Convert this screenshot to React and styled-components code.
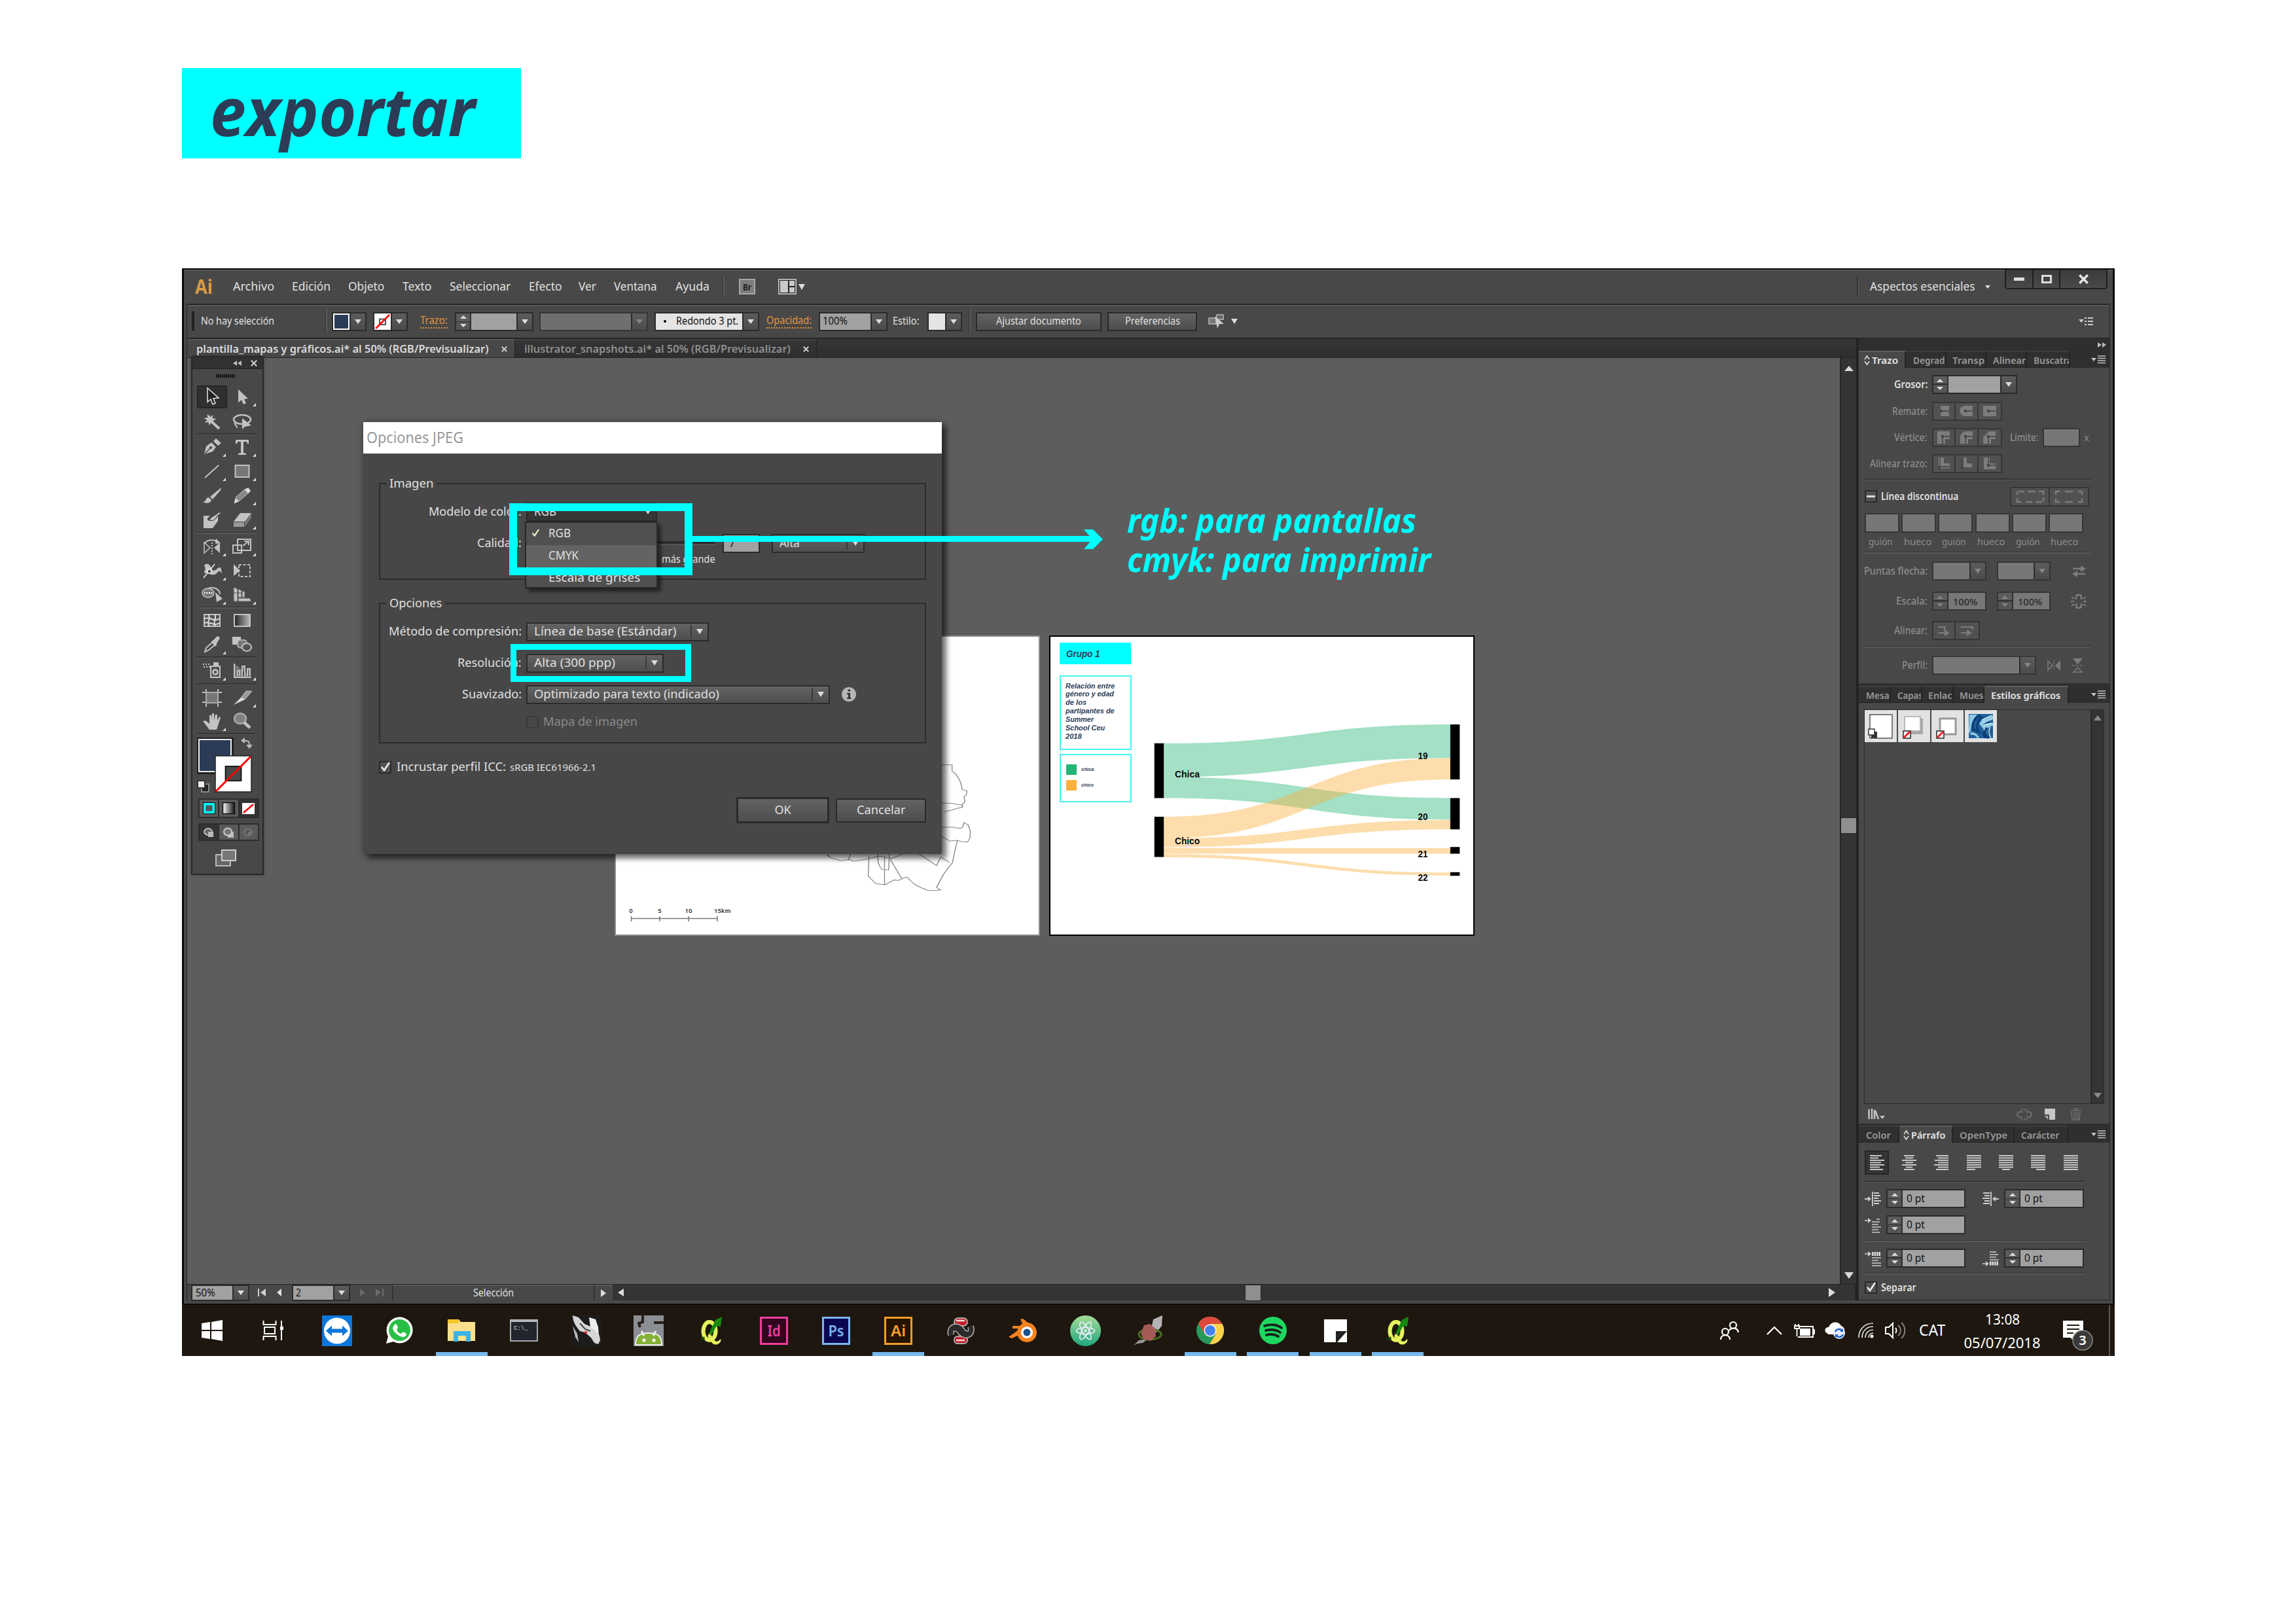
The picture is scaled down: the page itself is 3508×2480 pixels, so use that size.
import React, { useLayoutEffect, useRef, useState } from "react";
import styled, { createGlobalStyle, css } from "styled-components";

const ui = '"Noto Sans", "Open Sans", sans-serif';
const c = {
  panel: "#484848",
  canvas: "#5d5d5d",
  dark: "#262626",
  track: "#343434",
  hi: "#5a5a5a",
  text: "#e0e0e0",
  dim: "#8c8c8c",
  field: "#a1a1a1",
  off: "#777777",
  icon: "#c2c2c2",
  cyan: "#00ffff",
  navy: "#2c3c56",
  orange: "#e8953a",
};

const Global = createGlobalStyle`
  *, *::before, *::after { box-sizing: border-box; }
  html, body { margin: 0; padding: 0; background: #fff; }
  body { font-family: ${ui}; }
  svg { display: block; flex: none; overflow: visible; }
`;

/* ---------- text fitted to a width ---------- */
const FitBox = styled.span`
  display: block;
  flex: none;
  width: ${(p) => p.$w}px;
  margin-left: ${(p) => p.$gap || 0}px;
  font-size: ${(p) => p.$size}px;
  font-weight: ${(p) => p.$weight || 400};
  color: ${(p) => p.$color || "inherit"};
  line-height: 1.2;
`;
const FitInner = styled.span`
  display: inline-block;
  white-space: nowrap;
  transform-origin: left center;
`;
function Txt({ w, size = 18, weight, color, gap, children }) {
  const ref = useRef(null);
  const [k, setK] = useState(1);
  useLayoutEffect(() => {
    const n = ref.current.offsetWidth;
    if (n) setK(w / n);
  }, [w]);
  return (
    <FitBox $w={w} $size={size} $weight={weight} $color={color} $gap={gap}>
      <FitInner ref={ref} style={{ transform: `scaleX(${k})` }}>{children}</FitInner>
    </FitBox>
  );
}

/* ---------- page ---------- */
const Page = styled.main`
  width: 3508px;
  height: 2480px;
  padding: 104px 0 0 278px;
  background: #fff;
  overflow: hidden;
`;
const Title = styled.h1`
  margin: 0 0 168px;
  width: 518px;
  height: 138px;
  padding: 0 0 9px 43px;
  display: flex;
  align-items: center;
  background: ${c.cyan};
  color: ${c.navy};
  font-style: italic;
`;
const Screen = styled.section`
  width: 2953px;
  height: 1662px;
  display: flex;
  flex-direction: column;
`;
const Win = styled.div`
  height: 1584px;
  flex: none;
  display: flex;
  flex-direction: column;
  border: 3px solid #0a0a0a;
  border-width: 2px 3px;
  background: ${c.panel};
  color: ${c.text};
`;
const Row = styled.div`
  display: flex;
  align-items: center;
  height: ${(p) => (p.$h ? p.$h + "px" : "auto")};
  margin-top: ${(p) => p.$mt || 0}px;
  padding-left: ${(p) => p.$pl || 0}px;
  flex: none;
`;
const Gap = styled.span`
  flex: none;
  width: ${(p) => p.$w}px;
`;
const Grow = styled.span`
  flex: 1;
`;
const MenuBar = styled(Row)`
  height: 52px;
  padding-left: 17px;
  padding-bottom: 2px;
  border-top: 2px solid #5c5c5c;
  position: relative;
`;
const VLine = styled.span`
  flex: none;
  width: 3px;
  height: ${(p) => p.$h || 32}px;
  margin-left: ${(p) => p.$gap || 0}px;
  background: linear-gradient(90deg, #333 50%, #5a5a5a 50%);
`;
const WinButtons = styled.div`
  align-self: flex-start;
  display: flex;
  margin-top: -2px;
  margin-left: 22px;
  margin-right: 8px;
  width: 157px;
  height: 30px;
  border: 2px solid #1f1f1f;
  border-top: 0;
  border-radius: 0 0 5px 5px;
  background: linear-gradient(#3a3a3a, #4a4a4a);
`;
const WinButton = styled.span`
  width: ${(p) => p.$w}px;
  display: flex;
  align-items: center;
  justify-content: center;
  border-right: ${(p) => (p.$last ? 0 : "2px solid #1f1f1f")};
`;
const ControlBar = styled(Row)`
  height: 52px;
  margin: 0 4px;
  padding-left: 7px;
  border-top: 2px solid ${c.dark};
  border-left: 1px solid ${c.dark};
  border-right: 1px solid ${c.dark};
  box-shadow: inset 0 2px 0 ${c.hi};
`;
const Body = styled.div`
  display: flex;
  gap: 3px;
  height: 1471px;
  margin: 0 4px;
  padding-left: 1px;
  background: #222;
`;
const Left = styled.div`
  width: 2550px;
  display: flex;
  flex-direction: column;
`;
const DocTabs = styled.div`
  display: flex;
  height: 31px;
  padding-top: 2px;
  background: linear-gradient(#262626 2px, #363636 2px, #2e2e2e);
  border-bottom: 1px solid #252525;
`;
const DocTab = styled.div`
  width: ${(p) => p.$w}px;
  padding-left: 14px;
  display: flex;
  align-items: center;
  color: ${(p) => (p.$on ? "#dcdcdc" : "#8f8f8f")};
  background: ${(p) => (p.$on ? "#484848" : "transparent")};
  border-right: 1px solid #222;
  border-top: 2px solid ${(p) => (p.$on ? "#585858" : "#414141")};
`;
const Work = styled.div`
  display: flex;
  height: 1415px;
`;
const Canvas = styled.div`
  position: relative;
  width: 2525px;
  background: ${c.canvas};
`;
const VScroll = styled.div`
  width: 25px;
  display: flex;
  flex-direction: column;
  align-items: center;
  background: ${c.track};
  border-left: 2px solid ${c.dark};
`;
const Thumb = styled.span`
  width: 25px;
  height: 25px;
  flex: none;
  background: #8f8f8f;
  border: 1px solid #262626;
  margin: ${(p) => p.$m || 0};
`;
const Status = styled.div`
  display: flex;
  align-items: center;
  height: 25px;
  padding-left: 6px;
  background: ${c.panel};
  border-top: 1px solid ${c.dark};
`;
const StatusLabel = styled.span`
  display: flex;
  align-items: center;
  height: 24px;
  width: ${(p) => p.$w}px;
  padding-left: ${(p) => p.$pl || 0}px;
  justify-content: ${(p) => (p.$pl ? "flex-start" : "center")};
  border-left: 2px solid #333;
  border-top: 2px solid #585858;
`;
const HScroll = styled.div`
  display: flex;
  align-items: center;
  height: 24px;
  width: 1901px;
  padding-left: 8px;
  background: ${c.track};
  border-right: 2px solid ${c.dark};
`;

/* ---------- small controls ---------- */
const Tri = styled.span`
  flex: none;
  width: 0;
  height: 0;
  margin-left: ${(p) => p.$gap || 0}px;
  border: ${(p) => p.$s || 5}px solid transparent;
  ${(p) => {
    const s = p.$s || 5;
    const col = p.$color || "#dcdcdc";
    const len = p.$len || s * 1.4;
    if (p.$dir === "up") return css`border-top: 0; border-bottom: ${len}px solid ${col};`;
    if (p.$dir === "left") return css`border-left: 0; border-right: ${len}px solid ${col};`;
    if (p.$dir === "right") return css`border-right: 0; border-left: ${len}px solid ${col};`;
    return css`border-bottom: 0; border-top: ${len}px solid ${col};`;
  }}
`;
const Group = styled.span`
  display: flex;
  flex: none;
  height: ${(p) => p.$h || 29}px;
  margin-left: ${(p) => p.$gap || 0}px;
  border: 2px solid ${(p) => (p.$off ? "#363636" : "#2b2b2b")};
`;
const Well = styled.span`
  width: ${(p) => p.$w}px;
  display: flex;
  align-items: center;
  padding-left: ${(p) => p.$pl || 0}px;
  background: ${(p) => p.$bg || c.field};
  color: ${(p) => (p.$off ? "#2b2b2b" : "#111")};
  box-shadow: ${(p) => (p.$line ? "inset 0 0 0 2px #fff" : "none")};
`;
const DropBtn = styled.span`
  width: 24px;
  display: flex;
  align-items: center;
  justify-content: center;
  border-left: 2px solid #2b2b2b;
  background: linear-gradient(#5c5c5c, #4b4b4b);
`;
const StepBtn = styled.span`
  width: 23px;
  display: flex;
  flex-direction: column;
  align-items: center;
  justify-content: space-around;
  border-right: 2px solid #2f2f2f;
  background: linear-gradient(#5c5c5c 46%, #2f2f2f 46%, #2f2f2f 53%, #555 53%);
`;
function Combo({ w, bg, off, gap, h, pl, step, line, drop = true, children }) {
  const col = off ? "#858585" : "#dcdcdc";
  const inner = w - 4 - (step ? 23 : 0) - (drop ? 24 : 0);
  return (
    <Group $gap={gap} $h={h} $off={off}>
      {step && (
        <StepBtn>
          <Tri $dir="up" $s={5} $len={5} $color={col} />
          <Tri $s={5} $len={5} $color={col} />
        </StepBtn>
      )}
      <Well $w={inner} $bg={bg || (off ? c.off : c.field)} $pl={pl} $off={off} $line={line}>{children}</Well>
      {drop && <DropBtn><Tri $s={5} $color={col} /></DropBtn>}
    </Group>
  );
}
const Link = styled.span`
  flex: none;
  margin-left: ${(p) => p.$gap || 0}px;
  color: ${c.orange};
  border-bottom: 2px dotted ${c.orange};
  line-height: 1;
`;
const PushBtn = styled.span`
  display: flex;
  flex: none;
  align-items: center;
  justify-content: center;
  width: ${(p) => p.$w}px;
  height: ${(p) => p.$h || 29}px;
  margin-left: ${(p) => p.$gap || 0}px;
  border: ${(p) => p.$b || 2}px solid #2a2a2a;
  background: linear-gradient(#636363, #4d4d4d);
`;
const Grip = styled.span`
  flex: none;
  width: ${(p) => p.$w}px;
  height: ${(p) => p.$h}px;
  background: repeating-linear-gradient(${(p) => (p.$w > p.$h ? 90 : 180)}deg, #111 0 2px, transparent 2px 3px);
`;

/* ---------- floating tools ---------- */
const Tools = styled.div`
  position: absolute;
  left: 6px;
  top: -3px;
  width: 111px;
  height: 793px;
  display: flex;
  flex-direction: column;
  background: ${c.panel};
  border: 2px solid #282828;
  border-top-left-radius: 4px;
  border-top-right-radius: 4px;
  box-shadow: 0 0 4px rgba(0, 0, 0, 0.35);
`;
const ToolsHead = styled.div`
  height: 18px;
  flex: none;
  display: flex;
  align-items: center;
  justify-content: flex-end;
  gap: 14px;
  padding-right: 8px;
  background: #313131;
  border-bottom: 1px solid #222;
`;
const ToolsGrip = styled.div`
  height: 20px;
  display: flex;
  align-items: center;
  justify-content: center;
  padding-right: 6px;
  flex: none;
`;
const ToolRow = styled.div`
  display: flex;
  flex: none;
  height: ${(p) => p.$h || 37}px;
  padding-left: 7px;
  align-items: center;
`;
const ToolCell = styled.span`
  display: flex;
  align-items: center;
  justify-content: center;
  width: 46px;
  height: 35px;
  background: ${(p) => (p.$on ? "#303030" : "transparent")};
  border: ${(p) => (p.$on ? "2px solid #262626" : "0")};
`;
const Rule = styled.hr`
  flex: none;
  width: ${(p) => p.$w}px;
  height: 3px;
  margin: ${(p) => p.$m};
  border: 0;
  background: linear-gradient(#353535 50%, #585858 50%);
`;
const Chips = styled.div`
  display: flex;
  flex: none;
  width: 93px;
  height: ${(p) => p.$h}px;
  margin: ${(p) => p.$mt}px 0 0 9px;
  border: 2px solid #2d2d2d;
`;
const Chip = styled.span`
  flex: 1;
  display: flex;
  align-items: center;
  justify-content: center;
  background: ${(p) => (p.$on ? "#333" : "#5a5a5a")};
  border-left: ${(p) => (p.$first ? "0" : "2px solid #2d2d2d")};
`;

/* ---------- dialog ---------- */
const Dialog = styled.div`
  position: absolute;
  left: 269px;
  top: 98px;
  width: 884px;
  height: 660px;
  background: #474747;
  box-shadow: 7px 7px 8px rgba(0, 0, 0, 0.5), 0 0 10px rgba(0, 0, 0, 0.35);
  display: flex;
  flex-direction: column;
  padding: 0 24px;
`;
const DialogTitle = styled.div`
  margin: 0 -24px;
  height: 48px;
  flex: none;
  background: #fff;
  display: flex;
  align-items: center;
  padding-left: 5px;
`;
const FieldSet = styled.fieldset`
  flex: none;
  margin: ${(p) => p.$mt}px 0 0;
  padding: 0;
  min-width: 0;
  width: 836px;
  height: ${(p) => p.$h}px;
  border: 2px solid #2c2c2c;
`;
const Legend = styled.legend`
  height: 24px;
  margin-left: 9px;
  padding: 0 5px;
  display: flex;
  align-items: center;
`;
const FieldLabel = styled.span`
  flex: none;
  display: flex;
  justify-content: flex-end;
  width: ${(p) => p.$w}px;
  margin-right: 7px;
  color: ${(p) => (p.$off ? c.dim : c.text)};
`;
const SelectBox = styled.span`
  display: flex;
  flex: none;
  align-items: center;
  width: ${(p) => p.$w}px;
  height: 29px;
  margin-left: ${(p) => p.$gap || 0}px;
  padding-left: 10px;
  border: 2px solid #2a2a2a;
  background: ${(p) => (p.$open ? "#363636" : "linear-gradient(#636363, #4e4e4e)")};
`;
const SelectArrow = styled.span`
  margin-left: auto;
  width: 26px;
  height: 20px;
  display: flex;
  align-items: center;
  padding-left: 7px;
  border-left: 2px solid #3a3a3a;
`;
function Select({ w, tw, gap, open, children }) {
  return (
    <SelectBox $w={w} $gap={gap} $open={open}>
      <Txt w={tw} size={18}>{children}</Txt>
      <SelectArrow><Tri $s={5.5} $len={8} /></SelectArrow>
    </SelectBox>
  );
}
const Slider = styled.span`
  width: 289px;
  height: 6px;
  background: #2a2a2a;
  border-bottom: 2px solid #555;
`;
const Popup = styled.div`
  position: absolute;
  left: 247px;
  top: 152px;
  width: 203px;
  height: 102px;
  border: 2px solid #282828;
  background: #505050;
  box-shadow: 5px 5px 5px rgba(0, 0, 0, 0.5);
`;
const PopupItem = styled.div`
  height: 34px;
  display: flex;
  align-items: center;
  padding-left: ${(p) => (p.$checked ? 8 : 34)}px;
  padding-bottom: 2px;
  background: ${(p) => (p.$hot ? "#636363" : "transparent")};
`;
const Check = styled.span`
  flex: none;
  width: 19px;
  height: 19px;
  display: flex;
  align-items: center;
  justify-content: center;
  border: 2px solid ${(p) => (p.$off ? "#3a3a3a" : "#2a2a2a")};
  background: ${(p) => (p.$off ? "#474747" : "#525252")};
`;
const DialogButtons = styled.div`
  display: flex;
  align-items: center;
  justify-content: flex-end;
  gap: 10px;
  margin-top: 32px;
`;

/* ---------- artboards ---------- */
const Artboard = styled.div`
  position: absolute;
  left: ${(p) => p.$x}px;
  top: 424px;
  width: 650px;
  height: 459px;
  background: #fff;
  border: 2px solid ${(p) => (p.$on ? "#000" : "#8c8c8c")};
`;
const BoardArt = styled.svg`
  position: absolute;
  left: -2px;
  top: -2px;
`;
const Side = styled.div`
  display: flex;
  flex-direction: column;
  width: 110px;
  margin: 9px 0 0 14px;
  font-family: "Liberation Sans", Arial, sans-serif;
  font-weight: 700;
  font-style: italic;
  color: ${c.navy};
`;
const GroupName = styled.div`
  width: 109px;
  height: 33px;
  padding-left: 10px;
  display: flex;
  align-items: center;
  background: ${c.cyan};
`;
const Note = styled.div`
  height: 114px;
  margin-top: 17px;
  padding: 8px 0 0 7px;
  border: 2px solid #43f4f6;
  display: flex;
  flex-direction: column;
`;
const NoteLine = styled.div`
  height: 12.9px;
  display: flex;
  align-items: center;
`;
const Key = styled.div`
  height: 74px;
  margin-top: 6px;
  padding: 14px 0 0 8px;
  border: 2px solid #43f4f6;
  display: flex;
  flex-direction: column;
  gap: 8px;
`;
const KeyRow = styled.div`
  display: flex;
  align-items: center;
  gap: 7px;
`;
const KeyColor = styled.span`
  width: 16px;
  height: 16px;
  background: ${(p) => p.$bg};
`;

/* ---------- annotations ---------- */
const Frame = styled.span`
  position: absolute;
  left: ${(p) => p.$x}px;
  top: ${(p) => p.$y}px;
  width: ${(p) => p.$w}px;
  height: ${(p) => p.$h}px;
  border: ${(p) => p.$b}px solid ${c.cyan};
`;
const Arrow = styled.svg`
  position: absolute;
  left: 771px;
  top: 262px;
`;
const Callout = styled.div`
  position: absolute;
  left: 1436px;
  top: 218px;
  display: flex;
  flex-direction: column;
  color: ${c.cyan};
  font-style: italic;
`;

/* ---------- dock ---------- */
const Dock = styled.aside`
  width: 385px;
  display: flex;
  flex-direction: column;
  border: 1px solid #262626;
  background: #2f2f2f;
`;
const DockHead = styled.div`
  height: 19px;
  flex: none;
  display: flex;
  align-items: center;
  justify-content: flex-end;
  padding-right: 5px;
`;
const Tabs = styled.div`
  height: 26px;
  margin-top: ${(p) => p.$mt || 0}px;
  flex: none;
  display: flex;
  background: #2f2f2f;
`;
const Tab = styled.span`
  width: ${(p) => p.$w}px;
  flex: none;
  display: flex;
  align-items: center;
  overflow: hidden;
  padding-left: ${(p) => p.$pl}px;
  color: ${(p) => (p.$on ? "#e6e6e6" : "#999")};
  background: ${(p) => (p.$on ? c.panel : "#303030")};
  border-top: 2px solid ${(p) => (p.$on ? "#5e5e5e" : "#3d3d3d")};
  border-right: 2px solid #242424;
  border-bottom: ${(p) => (p.$on ? 0 : "1px solid #232323")};
`;
const TabMenu = styled.span`
  margin-left: auto;
  display: flex;
  align-items: center;
  padding-right: 6px;
`;
const Pane = styled.div`
  height: ${(p) => p.$h}px;
  flex: none;
  background: ${c.panel};
  display: flex;
  flex-direction: column;
`;
const OffBtns = styled.span`
  display: flex;
  flex: none;
  height: ${(p) => p.$h || 29}px;
  margin-left: ${(p) => p.$gap || 0}px;
  border: 2px solid #363636;
`;
const OffBtn = styled.span`
  width: ${(p) => p.$w || 34.5}px;
  display: flex;
  align-items: center;
  justify-content: center;
  background: #515151;
  border-right: ${(p) => (p.$last ? "0" : "2px solid #363636")};
`;
const DashCols = styled.div`
  display: grid;
  grid-template-columns: repeat(6, 53px);
  column-gap: 3.2px;
  margin-left: 9px;
  margin-top: ${(p) => p.$mt || 0}px;
  height: ${(p) => p.$h}px;
  flex: none;
  align-items: stretch;
`;
const DashField = styled.span`
  background: ${c.off};
  border: 2px solid #363636;
`;
const DashLabel = styled.span`
  display: flex;
  align-items: center;
  justify-content: center;
  padding-right: 4px;
`;
const StyleList = styled.div`
  display: flex;
  justify-content: space-between;
  width: 367px;
  height: 603px;
  margin: 10px 0 0 8px;
  border: 1px solid #2a2a2a;
  flex: none;
`;
const Swatches = styled.div`
  display: flex;
  gap: 2px;
`;
const Swatch = styled.span`
  width: 49px;
  height: 49px;
  background: #e2e2e2;
`;
const ListScroll = styled.div`
  width: 20px;
  display: flex;
  flex-direction: column;
  align-items: center;
  justify-content: space-between;
  padding: 8px 0;
  background: ${c.track};
  border-left: 2px solid #2a2a2a;
`;
const AlignBtn = styled.span`
  width: 37px;
  height: 37px;
  margin-right: 12.4px;
  flex: none;
  display: flex;
  align-items: center;
  justify-content: center;
  background: ${(p) => (p.$on ? "#343434" : "transparent")};
  border: ${(p) => (p.$on ? "2px solid #262626" : "0")};
`;

/* ---------- taskbar ---------- */
const Taskbar = styled.footer`
  height: 78px;
  display: flex;
  background: #1e170f;
  color: #fff;
`;
const Task = styled.span`
  flex: none;
  width: ${(p) => p.$w || 95.35}px;
  display: flex;
  align-items: center;
  justify-content: center;
  background: ${(p) => (p.$run ? "linear-gradient(#76b9ed,#76b9ed) center bottom / 79px 6px no-repeat" : "none")};
`;
const Clock = styled(Task)`
  flex-direction: column;
  gap: 10px;
`;
const TrayEnd = styled.span`
  flex: none;
  width: 9px;
  margin-left: 25px;
  border-left: 2px solid #5a5650;
`;

/* ---------- drawings ---------- */
const G = c.icon;
const toolArt = {
  select: <path d="M9 1v21l5-4 3 8 4-2-3-7 8-1z" fill="#222" stroke="#ddd" strokeWidth="1.6" />,
  direct: <path d="M10 3v20l5-4 3 7 4-2-3-6 6-1z" fill={G} />,
  wand: <><path d="M12 1l1.500 5 4-3-1 5 6 1-5 3 2 4-5-1-3 4-1-5-6 1 4-4-5-3 6-1-1-5 4 3z" fill={G} /><path d="M16 14l11 10" stroke={G} strokeWidth="4" /></>,
  lasso: <><ellipse cx="16" cy="10" rx="13" ry="7" fill="none" stroke={G} strokeWidth="2.500" /><path d="M5 14c-2 5 4 4 3 9" fill="none" stroke={G} strokeWidth="2" /><path d="M16 8v17l4-4 10-2z" fill={G} /></>,
  pen: <><path d="M4 25l3-12 8-6 7 7-5 7z" fill={G} /><path d="M18 5l4-4 8 7-5 4z" fill={G} /><path d="M5 24l9-9" stroke="#444" strokeWidth="1.500" /><circle cx="14" cy="15" r="2" fill="#444" /></>,
  type: <path d="M6 3h20v6h-2l-1-3h-5v17l4 1v2H10v-2l4-1V6H9L8 9H6z" fill={G} />,
  line: <path d="M5 24L26 5" stroke={G} strokeWidth="2" />,
  rect: <rect x="5.500" y="5" width="21" height="18" fill="#777" stroke={G} strokeWidth="2" />,
  brush: <><path d="M13 16L30 2l-1 4-12 14z" fill={G} /><path d="M2 24c5 0 4-7 9-7l4 4c-1 5-8 6-13 3z" fill={G} /></>,
  pencil: <><path d="M4 26l3-10L21 4l6 5L12 22z" fill="#888" stroke={G} /><path d="M20 5l5-3 4 5-4 4z" fill="#ddd" /><path d="M4 26l2-8 5 5z" fill="#ddd" /></>,
  blob: <><path d="M3 8h10c-6 5-6 8 2 8 8-1 7-6 10-8v8l-8 11H3z" fill={G} /><path d="M12 15c2-6 8-6 14-12h5l-8 6c-2 6-6 7-11 6z" fill={G} stroke="#333" strokeWidth=".8" /></>,
  eraser: <><path d="M3 17L13 4h17L20 17z" fill={G} /><path d="M3 18h16v7H3z" fill="#999" /><path d="M20 17l10-12v6L20 25z" fill="#777" /></>,
  reflect: <><path d="M5 9c4-6 14-6 20-2" fill="none" stroke={G} strokeWidth="2" /><path d="M22 2l7 7-8 1z" fill={G} /><path d="M4 8v16l9-8z" fill="none" stroke={G} strokeWidth="1.500" /><path d="M28 8v16l-9-8z" fill={G} /><path d="M16 8v18" stroke={G} strokeWidth="2" strokeDasharray="2 2" /></>,
  scale: <><rect x="9" y="3" width="20" height="17" fill="none" stroke={G} strokeWidth="2" /><rect x="2" y="12" width="13" height="12" fill="none" stroke={G} strokeWidth="2" /><path d="M17 13l8-6m-6-1h7v6" stroke={G} strokeWidth="2" fill="none" /></>,
  warp: <><path d="M4 6c6-6 9 0 12 6s9-4 12-3 2 6 3 10c-3-5-4-6-7-2s-8 4-12 2-9 0-8-3 3-2 0-10z" fill={G} /><path d="M3 25L20 4" stroke="#eee" strokeWidth="1.500" /><circle cx="12" cy="15" r="3" fill="#444" stroke="#eee" strokeWidth="1.500" /></>,
  free: <><path d="M3 4v18l10-8z" fill={G} /><rect x="11" y="5" width="17" height="18" fill="none" stroke={G} strokeWidth="2" strokeDasharray="4 2.500" /></>,
  shape: <><ellipse cx="10" cy="11" rx="9" ry="7" fill="#777" stroke={G} strokeWidth="1.500" /><path d="M10 4c10-3 18 2 18 9" fill="none" stroke={G} strokeWidth="2" /><path d="M4 11h14" stroke="#fff" strokeWidth="2" strokeDasharray="2 1.500" /><path d="M21 10l11 10-9 5z" fill={G} /></>,
  persp: <path d="M3 2l6 3v19H3zM10 5l5 2v11h-5zM16 8l4 1v9h-4zM10 19h18l2 5H10zM3 11h12" fill={G} stroke="#555" strokeWidth="1" />,
  mesh: <><rect x="4" y="5" width="24" height="18" fill="#555" stroke={G} strokeWidth="2" /><path d="M4 12c8-6 14 6 24-1M4 18c8-4 14 6 24 0M10 5c6 6-4 12 2 18M20 5c4 6-4 12 1 18" fill="none" stroke="#ddd" strokeWidth="2" /></>,
  grad: <><defs><linearGradient id="tg"><stop offset="0" stopColor="#222" /><stop offset="1" stopColor="#bbb" /></linearGradient></defs><rect x="4" y="5" width="24" height="18" fill="url(#tg)" stroke={G} strokeWidth="2" /></>,
  dropper: <><path d="M5 25l2-6 10-9 4 4-11 9z" fill="none" stroke={G} strokeWidth="2" /><path d="M15 9l3-2 5-5c3-2 6 1 4 4l-4 6 0 3-3 2z" fill={G} /></>,
  blend: <><path d="M1 2h13v12H1z" fill={G} /><rect x="9" y="7" width="14" height="12" rx="4" fill="#777" stroke={G} strokeWidth="1.500" /><ellipse cx="23" cy="18" rx="7" ry="6" fill="#555" stroke={G} strokeWidth="2" /></>,
  spray: <><path d="M2 4h12M3 8h10" stroke={G} strokeWidth="2" strokeDasharray="2 2" /><path d="M18 1h8v5h-8z" fill={G} /><rect x="14" y="7" width="14" height="17" fill="#555" stroke={G} strokeWidth="2" /><circle cx="21" cy="16" r="3.500" fill="none" stroke="#ddd" strokeWidth="2" /></>,
  graph: <path d="M4 3v21h26M9 22v-8h3v8M16 22V7h4v15M24 22V11h4v11" fill="#777" stroke={G} strokeWidth="2" />,
  board: <><rect x="7" y="6" width="18" height="16" fill="#777" stroke={G} strokeWidth="1.500" /><path d="M1 6h5M26 6h5M1 21h5M26 21h5M7 1v4M25 1v4M7 23v5M25 23v5" stroke={G} strokeWidth="2" /></>,
  slice: <><path d="M3 25L15 13l5 4z" fill="#ddd" /><path d="M15 13L22 4h9L20 17z" fill="#999" stroke={G} /></>,
  hand: <path d="M2 14l4-1 6 5V5h3v8l1-11h3v11l2-9h3v9l3-6 2 1-3 10-3 9H12z" fill={G} />,
  zoom: <><ellipse cx="13" cy="10" rx="9" ry="8" fill="#808080" stroke="#aaa" strokeWidth="2.500" /><path d="M19 16l9 8" stroke={G} strokeWidth="5" /></>,
};
function Tool({ n, on, fly }) {
  return (
    <ToolCell $on={on}>
      <svg width="32" height="28" viewBox="0 0 32 28">
        {toolArt[n]}
        {fly && <path d="M37 24v5h-5z" fill="#ddd" />}
      </svg>
    </ToolCell>
  );
}
const CloseX = ({ s = 12, color = "#cfcfcf", sw = 2.5 }) => (
  <svg width={s} height={s} viewBox="0 0 12 12"><path d="M1 1l10 10M11 1L1 11" stroke={color} strokeWidth={sw} /></svg>
);
const Chevrons = ({ flip }) => (
  <svg width="13" height="8" viewBox="0 0 13 8"><path d={flip ? "M6 0v8L0 4zM13 0v8L7 4z" : "M0 0v8l6-4zM7 0v8l6-4z"} fill="#bbb" /></svg>
);
const ListMenu = () => (
  <svg width="22" height="12" viewBox="0 0 22 12"><path d="M0 4h8L4 9z" fill="#c4c4c4" /><path d="M10 1h12M10 4.500h12M10 8h12M10 11.500h12" stroke="#c4c4c4" strokeWidth="1.700" /></svg>
);
const Diamond = () => (
  <svg width="9" height="15" viewBox="0 0 9 15"><path d="M1 6l3.500-5L8 6M1 9l3.500 5L8 9" fill="none" stroke="#ddd" strokeWidth="1.600" /></svg>
);
const Tick = ({ color = "#ececec", s = 15 }) => (
  <svg width={s} height={s} viewBox="0 0 15 15"><path d="M2 7l4 5L14 0" fill="none" stroke={color} strokeWidth="2.600" /></svg>
);
const None = ({ w, h, hollow }) => (
  <svg width={w} height={h} viewBox={`0 0 ${w} ${h}`}>
    <rect width={w} height={h} fill="#fff" />
    {hollow && <rect x={w * 0.32} y={h * 0.34} width={w * 0.36} height={h * 0.34} fill="none" stroke="#222" strokeWidth="1.500" />}
    <path d={`M2 ${h - 2}L${w - 2} 2`} stroke="#f00" strokeWidth="2.500" />
  </svg>
);
const O = "#7c7c7c";
const SmallIcon = ({ d, w = 22, h = 16, fill = O, stroke, extra }) => (
  <svg width={w} height={h} viewBox={`0 0 ${w} ${h}`}><path d={d} fill={fill} stroke={stroke} strokeWidth="1.700" />{extra}</svg>
);
const dot = (x, y) => <rect x={x} y={y} width="4" height="4" fill="#444" />;
const alignLines = {
  left: [[0, 18], [0, 13], [0, 22], [0, 17], [0, 22], [0, 15], [0, 20]],
  center: [[3, 19], [5, 17], [0, 22], [5, 17], [0, 22], [6, 16], [3, 19]],
  right: [[3, 22], [6, 22], [1, 22], [6, 22], [0, 22], [6, 22], [3, 22]],
  jl: [[0, 22], [0, 22], [0, 22], [0, 22], [0, 22], [0, 22], [0, 13]],
  jc: [[0, 22], [0, 22], [0, 22], [0, 22], [0, 22], [0, 22], [5, 17]],
  jr: [[0, 22], [0, 22], [0, 22], [0, 22], [0, 22], [0, 22], [8, 22]],
  jj: [[0, 22], [0, 22], [0, 22], [0, 22], [0, 22], [0, 22], [0, 22]],
};
const AlignArt = ({ k }) => (
  <svg width="22" height="23" viewBox="0 0 22 23">
    {alignLines[k].map(([a, b], i) => <path key={i} d={`M${a} ${1 + i * 3.5}H${b}`} stroke="#cfcfcf" strokeWidth="1.900" />)}
  </svg>
);
const Indent = ({ k }) => (
  <svg width="25" height="22" viewBox="0 0 25 22">
    {k === "left" && <path d="M0 11h8M12 0v22M14 2h8M14 6h10M14 10h7M14 14h11M14 18h8" stroke="#ccc" strokeWidth="1.800" />}
    {k === "left" && <path d="M5 7l5 4-5 4z" fill="#ccc" />}
    {k === "right" && <path d="M18 11h7M13 0v22M1 2h10M3 6h8M0 10h11M3 14h8M1 18h10" stroke="#ccc" strokeWidth="1.800" />}
    {k === "right" && <path d="M20 7l-5 4 5 4z" fill="#ccc" />}
    {k === "first" && <path d="M0 4h8M18 2h5M11 6h12M11 10h10M11 14h14M11 18h10M11 22h12" stroke="#ccc" strokeWidth="1.700" />}
    {k === "before" && <path d="M0 4h8M11 10h14M11 14h10M11 18h14M11 22h14" stroke="#ccc" strokeWidth="1.700" />}
    {k === "before" && <path d="M11 4h14" stroke="#ddd" strokeWidth="6" strokeDasharray="2.500 1" />}
    {(k === "first" || k === "before") && <path d="M5 0l5 4-5 4z" fill="#ccc" />}
    {k === "after" && <path d="M11 1h10M11 5h13M11 9h10M11 13h14M0 19h8" stroke="#ccc" strokeWidth="1.700" />}
    {k === "after" && <path d="M11 18.500h14" stroke="#ddd" strokeWidth="6" strokeDasharray="2.500 1" />}
    {k === "after" && <path d="M5 15l5 4-5 4z" fill="#ccc" />}
  </svg>
);
const QGis = () => (
  <svg width="34" height="42" viewBox="0 0 34 42">
    <ellipse cx="14" cy="22" rx="9.500" ry="14" fill="none" stroke="#e6f25c" strokeWidth="6" />
    <path d="M13 27c5 0 5 9 10 11 3 1 6 0 8-3-1 7-9 9-13 4-2-3-2-7-6-8z" fill="#e6f25c" stroke="#e6f25c" strokeWidth="1.500" />
    <path d="M13 26L23 5l10-5-2 15-6-1-8 14z" fill="#148a10" />
    <path d="M0 34l6-4 1 6z" fill="#12500f" />
  </svg>
);
const adobeBox = (t, col, bg, w) => (
  <svg width="43" height="43" viewBox="0 0 43 43">
    <rect x="1.500" y="1.500" width="40" height="40" fill={bg} stroke={col} strokeWidth="3" />
    <text x="21.500" y="30" fontSize="24" fontWeight="600" textAnchor="middle" fill={col} textLength={w} lengthAdjust="spacingAndGlyphs" fontFamily="Noto Sans, sans-serif">{t}</text>
  </svg>
);
const sankey = (a, b, d, e) => `M632 ${a}C1040 ${a} 1040 ${d} 1449 ${d}V${e}C1040 ${e} 1040 ${b} 632 ${b}Z`;

const offIcons = {
  cap: [
    <SmallIcon key="1" w={16} h={16} d="M3 0h13v16H3z" extra={<>{dot(2, 6)}<path d="M5 8h11" stroke="#444" strokeWidth="1.500" /></>} />,
    <SmallIcon key="2" w={20} h={16} d="M20 0H8C-2 1-2 15 8 16h12z" extra={<>{dot(7, 6)}<path d="M9 8h11" stroke="#444" strokeWidth="1.500" /></>} />,
    <SmallIcon key="3" w={20} h={16} d="M0 0h20v16H0z" extra={<>{dot(6, 6)}<path d="M9 8h11" stroke="#444" strokeWidth="1.500" /></>} />,
  ],
  corner: [
    <SmallIcon key="1" w={19} h={19} d="M0 0h19v12h-7v7H0z" extra={<>{dot(6, 6)}<path d="M8 19V8h11" fill="none" stroke="#444" strokeWidth="1.500" /></>} />,
    <SmallIcon key="2" w={19} h={19} d="M10 0h9v12h-7v7H0V10C0 4 4 0 10 0z" extra={<>{dot(6, 6)}<path d="M8 19V8h11" fill="none" stroke="#444" strokeWidth="1.500" /></>} />,
    <SmallIcon key="3" w={19} h={19} d="M9 0h10v12h-7v7H0V9z" extra={<>{dot(6, 6)}<path d="M8 19V8h11" fill="none" stroke="#444" strokeWidth="1.500" /></>} />,
  ],
  stroke: [
    <SmallIcon key="1" w={18} h={19} d="M4 0h5v9h9v4H4z" extra={<><path d="M1.500 0v16H18" fill="none" stroke={O} strokeWidth="1.500" />{dot(0, 13)}</>} />,
    <SmallIcon key="2" w={18} h={19} d="M5 0h5v9h8v8H5z" extra={<><path d="M3 2v14h15" fill="none" stroke="#444" strokeWidth="1.500" />{dot(0, 13)}</>} />,
    <SmallIcon key="3" w={18} h={19} d="M0 0h9v9h9v9H0z" extra={<><path d="M7 0v12h11" fill="none" stroke="#444" strokeWidth="1.500" />{dot(5, 10)}</>} />,
  ],
};
function OffTrio({ items }) {
  return <OffBtns>{items.map((it, i) => <OffBtn key={i} $last={i === items.length - 1}>{it}</OffBtn>)}</OffBtns>;
}

const menus = [["Archivo", 63, 26], ["Edición", 59, 27], ["Objeto", 55, 27], ["Texto", 44, 28], ["Seleccionar", 93, 28], ["Efecto", 50, 28], ["Ver", 27, 26], ["Ventana", 66, 27], ["Ayuda", 52, 28]];

function TopBars() {
  return (
    <>
      <MenuBar>
        <Txt w={27} size={31} weight={700} color="#d99a41">Ai</Txt>
        <Gap $w={5} />
        {menus.map(([t, w, g]) => <Txt key={t} w={w} gap={g} size={18}>{t}</Txt>)}
        <VLine $gap={20} />
        <Gap $w={22} />
        <svg width="25" height="24" viewBox="0 0 25 24"><rect x="1" y="1" width="23" height="22" fill="#7d7d7d" stroke="#a8a8a8" strokeWidth="2" /><text x="6" y="18" fontSize="14" fontWeight="700" fill="#222" textLength="13" lengthAdjust="spacingAndGlyphs" fontFamily="Noto Sans, sans-serif">Br</text></svg>
        <Gap $w={35} />
        <svg width="28" height="24" viewBox="0 0 28 24"><rect x="1" y="1" width="26" height="22" fill="#222" stroke="#ddd" strokeWidth="1.500" /><path d="M3 3h12v18H3zM17 3h8v8h-8zM17 13h8v8h-8z" fill="#c9c9c9" /></svg>
        <Tri $gap={3} $len={9} />
        <Grow />
        <VLine />
        <Txt w={161} gap={17} size={18}>Aspectos esenciales</Txt>
        <Tri $gap={15} $s={4} $len={5} />
        <WinButtons>
          <WinButton $w={42}><svg width="16" height="5"><rect width="16" height="5" fill="#ddd" /></svg></WinButton>
          <WinButton $w={41}><svg width="16" height="13"><rect x="1.500" y="1.500" width="13" height="10" fill="none" stroke="#ddd" strokeWidth="3" /></svg></WinButton>
          <WinButton $w={70} $last><CloseX s={15} color="#e6e6e6" sw={2.8} /></WinButton>
        </WinButtons>
      </MenuBar>
      <ControlBar>
        <Grip $w={4} $h={30} />
        <Txt w={112} gap={10} size={16}>No hay selección</Txt>
        <VLine $gap={78} $h={38} />
        <Combo gap={7} w={53} bg={c.navy} line />
        <Group $gap={10}>
          <None w={25} h={25} hollow />
          <DropBtn><Tri /></DropBtn>
        </Group>
        <Link $gap={19}><Txt w={42} size={16}>Trazo:</Txt></Link>
        <Combo gap={11} w={120} step />
        <Combo gap={9} w={166} off bg="#6f6f6f" />
        <Combo gap={10} w={160} bg="#e4e4e4" pl={12}>
          <svg width="4" height="4"><circle cx="2" cy="2" r="2" /></svg>
          <Txt w={95} gap={15} size={16}>Redondo 3 pt.</Txt>
        </Combo>
        <Link $gap={11}><Txt w={69} size={16}>Opacidad:</Txt></Link>
        <Combo gap={11} w={105} pl={4}><Txt w={38} size={16}>100%</Txt></Combo>
        <Txt w={41} gap={8} size={16}>Estilo:</Txt>
        <Combo gap={12} w={53} bg="#e4e4e4" />
        <VLine $gap={10} $h={38} />
        <PushBtn $gap={8} $w={192}><Txt w={130} size={16}>Ajustar documento</Txt></PushBtn>
        <PushBtn $gap={9} $w={137}><Txt w={84} size={16}>Preferencias</Txt></PushBtn>
        <Gap $w={17} />
        <svg width="25" height="22" viewBox="0 0 25 22"><rect x="1" y="6" width="11" height="9" fill="#777" stroke="#bbb" strokeWidth="1.500" /><rect x="13" y="1" width="10" height="7" fill="#666" stroke="#bbb" strokeWidth="1.500" /><path d="M10 3l14 12-7 0-3 7z" fill="#ccc" /></svg>
        <Tri $gap={10} $len={8} />
        <Grow />
        <svg width="22" height="12" viewBox="0 0 22 12"><path d="M0 3h8L4 8z" fill="#ccc" /><path d="M9 1h3M9 6h3M9 11h3M14 1h8M14 6h8M14 11h8" stroke="#ccc" strokeWidth="2" /></svg>
        <Gap $w={25} />
      </ControlBar>
    </>
  );
}

function ToolPanel() {
  return (
    <Tools>
      <ToolsHead><Chevrons flip /><CloseX s={10} /></ToolsHead>
      <ToolsGrip><Grip $w={29} $h={5} /></ToolsGrip>
      <ToolRow $h={44}><Tool n="select" on /><Tool n="direct" fly /></ToolRow>
      <ToolRow $h={34}><Tool n="wand" /><Tool n="lasso" /></ToolRow>
      <Rule $w={92} $m="0 0 0 7px" />
      <ToolRow $h={36}><Tool n="pen" fly /><Tool n="type" fly /></ToolRow>
      <ToolRow><Tool n="line" fly /><Tool n="rect" fly /></ToolRow>
      <ToolRow><Tool n="brush" /><Tool n="pencil" fly /></ToolRow>
      <ToolRow><Tool n="blob" /><Tool n="eraser" fly /></ToolRow>
      <Rule $w={92} $m="1px 0 0 7px" />
      <ToolRow><Tool n="reflect" fly /><Tool n="scale" fly /></ToolRow>
      <ToolRow><Tool n="warp" fly /><Tool n="free" /></ToolRow>
      <ToolRow><Tool n="shape" fly /><Tool n="persp" fly /></ToolRow>
      <Rule $w={92} $m="0 0 0 7px" />
      <ToolRow $h={36}><Tool n="mesh" /><Tool n="grad" /></ToolRow>
      <ToolRow><Tool n="dropper" fly /><Tool n="blend" /></ToolRow>
      <Rule $w={92} $m="0 0 0 7px" />
      <ToolRow $h={38}><Tool n="spray" fly /><Tool n="graph" fly /></ToolRow>
      <Rule $w={92} $m="0 0 0 7px" />
      <ToolRow><Tool n="board" /><Tool n="slice" fly /></ToolRow>
      <ToolRow $h={36}><Tool n="hand" fly /><Tool n="zoom" /></ToolRow>
      <Rule $w={92} $m="0 0 0 7px" />
      <Row $mt={4} $pl={7} $h={86}>
        <svg width="92" height="86" viewBox="0 0 92 86">
          <rect x="1.500" y="1.500" width="53" height="53" fill={c.navy} stroke="#222" strokeWidth="3" />
          <rect x="3" y="3" width="49" height="49" fill={c.navy} stroke="#fff" strokeWidth="1.800" />
          <rect x="28" y="28" width="55" height="55" fill="#fff" stroke="#222" strokeWidth="1.500" />
          <rect x="43.500" y="44" width="24" height="22" fill="#484848" stroke="#111" strokeWidth="1.800" />
          <path d="M29 82L82 29" stroke="#f00" strokeWidth="3" />
          <path d="M70 5h5c5 0 5 3 5 8" fill="none" stroke="#bbb" strokeWidth="2" /><path d="M73 0v9l-6-4.500zM75 11h10l-5 6z" fill="#bbb" />
          <path d="M7 71h11v12H7z" fill="#222" stroke="#888" strokeWidth="2" /><rect x="1" y="66" width="11" height="11" fill="#eee" stroke="#333" strokeWidth="2" />
        </svg>
      </Row>
      <Chips $h={30} $mt={7}>
        <Chip $first><svg width="19" height="18"><rect x="2.500" y="2.500" width="14" height="13" fill="#555" stroke="#0ff" strokeWidth="4" /><rect x=".5" y=".5" width="18" height="17" fill="none" stroke="#111" /></svg></Chip>
        <Chip><svg width="19" height="18"><defs><linearGradient id="cg"><stop offset="0" stopColor="#fff" /><stop offset="1" stopColor="#111" /></linearGradient></defs><rect x=".5" y=".5" width="18" height="17" fill="url(#cg)" stroke="#111" strokeWidth="1.500" /></svg></Chip>
        <Chip $on><None w={19} h={17} /></Chip>
      </Chips>
      <Chips $h={27} $mt={8}>
        <Chip $on $first><svg width="16" height="16"><ellipse cx="7" cy="7" rx="6" ry="5" fill="#666" stroke="#bbb" strokeWidth="2" /><rect x="7" y="7" width="8" height="8" fill="#bbb" /></svg></Chip>
        <Chip><svg width="16" height="16"><rect x="7" y="7" width="9" height="9" fill="#bbb" /><ellipse cx="7" cy="7" rx="6" ry="5.500" fill="#777" stroke="#ccc" strokeWidth="2" /></svg></Chip>
        <Chip><svg width="16" height="16"><ellipse cx="7" cy="8" rx="6" ry="5" fill="#555" stroke="#777" strokeWidth="2" /><path d="M7 7h7l-7 6z" fill="#777" /></svg></Chip>
      </Chips>
      <Row $mt={13} $pl={35}>
        <svg width="32" height="26" viewBox="0 0 32 26"><rect x="1" y="8" width="22" height="17" fill="#666" stroke="#bbb" strokeWidth="2" /><rect x="10" y="1" width="21" height="16" fill="#777" stroke="#ccc" strokeWidth="2" /></svg>
      </Row>
    </Tools>
  );
}

function JpegDialog() {
  return (
    <Dialog>
      <DialogTitle><Txt w={148} size={23} color="#999">Opciones JPEG</Txt></DialogTitle>
      <FieldSet $mt={34} $h={159}>
        <Legend><Txt w={67}>Imagen</Txt></Legend>
        <Row $mt={17} $h={28}>
          <FieldLabel $w={216}><Txt w={142}>Modelo de color:</Txt></FieldLabel>
          <Select w={200} tw={34} open>RGB</Select>
        </Row>
        <Row $mt={20} $h={28}>
          <FieldLabel $w={216}><Txt w={68}>Calidad:</Txt></FieldLabel>
          <Slider />
          <Gap $w={11} />
          <Combo w={57} drop={false} pl={8}><Txt w={9} size={17}>7</Txt></Combo>
          <Select gap={18} w={142} tw={31}>Alta</Select>
        </Row>
        <Row $mt={1} $h={20} $pl={430}><Txt w={82} size={16}>más grande</Txt></Row>
      </FieldSet>
      <FieldSet $mt={24} $h={226}>
        <Legend><Txt w={80}>Opciones</Txt></Legend>
        <Row $mt={17} $h={28}>
          <FieldLabel $w={216}><Txt w={203}>Método de compresión:</Txt></FieldLabel>
          <Select w={279} tw={217}>Línea de base (Estándar)</Select>
        </Row>
        <Row $mt={20} $h={28}>
          <FieldLabel $w={216}><Txt w={98}>Resolución:</Txt></FieldLabel>
          <Select w={210} tw={124}>Alta (300 ppp)</Select>
        </Row>
        <Row $mt={20} $h={28}>
          <FieldLabel $w={216}><Txt w={91}>Suavizado:</Txt></FieldLabel>
          <Select w={464} tw={283}>Optimizado para texto (indicado)</Select>
          <Gap $w={18} />
          <svg width="22" height="22" viewBox="0 0 22 22"><circle cx="11" cy="11" r="11" fill="#b5b5b5" /><path d="M9.500 3.500h3.500v3h-3.500zM8 9h5v7h1.500v2h-6.500v-2h2v-5h-2z" fill="#333" /></svg>
        </Row>
        <Row $mt={14} $h={28} $pl={223}>
          <Check $off />
          <Txt w={144} gap={7} color="#8a8a8a">Mapa de imagen</Txt>
        </Row>
      </FieldSet>
      <Row $mt={22} $h={28}>
        <Check><Tick /></Check>
        <Txt w={167} gap={8}>Incrustar perfil ICC:</Txt>
        <Txt w={132} gap={6} size={15}>sRGB IEC61966-2.1</Txt>
      </Row>
      <DialogButtons>
        <PushBtn $w={142} $h={40} $b={3}><Txt w={25}>OK</Txt></PushBtn>
        <PushBtn $w={138} $h={37}><Txt w={75}>Cancelar</Txt></PushBtn>
      </DialogButtons>
      <Popup>
        <PopupItem $checked><Tick color="#fdf6d0" s={12} /><Txt w={34} gap={14}>RGB</Txt></PopupItem>
        <PopupItem $hot><Txt w={46}>CMYK</Txt></PopupItem>
        <PopupItem><Txt w={140}>Escala de grises</Txt></PopupItem>
      </Popup>
    </Dialog>
  );
}

const noteLines = [["Relación entre", 75], ["género y edad", 74], ["de los", 32], ["partipantes de", 75], ["Summer", 43], ["School Ceu", 60], ["2018", 25]];

function Boards() {
  const lab = { fontFamily: "Liberation Sans, sans-serif", fontWeight: 700, fontSize: 15, fill: "#0a0a0a", lengthAdjust: "spacingAndGlyphs" };
  const km = { fontFamily: "Noto Sans, sans-serif", fontSize: 9.5, fill: "#333", fontWeight: 600 };
  return (
    <>
      <Artboard $x={653}>
        <BoardArt width="650" height="459" viewBox="0 0 650 459">
          <g transform="scale(.4464 .3333) translate(-88 -33)" fill="none" stroke="#858585" strokeWidth="3">
            <path d="M1207 626h36v28l12 14 10 20 8 20 5 32 16 5 -2 20 -8 6 3 25 -10 12 3 12 -20 6 -20 8 -25 8" />
            <path d="M1207 802l30 0 44 10M1207 912h40l25 6 8 -8 4 -20 14 12 8 30 -2 30 -8 18 -20 -2 -18 -6 -20 4 -30 -20" />
            <path d="M1262 972l-8 40 -10 64 -14 22 -16 30 -16 40 -8 20 14 12 -26 3 -20 -2 -18 -10 -22 -14 -16 -18 -12 -18 -12 3 -18 12 -16 -2 -30 22 -32 -6 -14 -18 -12 -16 3 -94" />
            <path d="M1012 1050v128M990 1030c-4 50 6 66 14 76l22 2 3 -76M1032 1060l22 50 18 40M815 1040l14 12 32 14 30 -6 15 8 40 -8 50 -16 40 12 40 -22M1130 1035l30 26 30 28 14 -40 30 24M820 1036v12M896 1034l-8 30" />
          </g>
          <g stroke="#777" strokeWidth="1.500"><path d="M25 432.500h132M25.500 429v8M69 429v8M113 429v8M157 429v8" /></g>
          <text x="25" y="424" textAnchor="middle" {...km}>0</text>
          <text x="69" y="424" textAnchor="middle" {...km}>5</text>
          <text x="113" y="424" textAnchor="middle" {...km}>10</text>
          <text x="152" y="424" {...km}>15km</text>
        </BoardArt>
      </Artboard>
      <Artboard $x={1317} $on>
        <BoardArt width="650" height="459" viewBox="0 0 650 459">
          <g transform="scale(.5357 .4592) translate(-305 -503)">
            <g fill="#22b573" opacity=".41"><path d={sankey(862, 974, 799, 911)} /><path d={sankey(974, 1044, 1044, 1116)} /></g>
            <g fill="#fbb03b" opacity=".42"><path d={sankey(1106, 1178, 911, 982)} /><path d={sankey(1178, 1208, 1117, 1148)} /><path d={sankey(1210, 1229, 1210, 1229)} /><path d={sankey(1231, 1241, 1292, 1302)} /></g>
            <path d="M605 862h27v182h-27zM605 1106h27v134h-27zM1449 799h27v183h-27zM1449 1044h27v104h-27zM1449 1207h27v22h-27zM1449 1291h27v12h-27z" />
          </g>
          <text x="192" y="217" textLength="38" {...lab}>Chica</text>
          <text x="192" y="319" textLength="38" {...lab}>Chico</text>
          <text x="563.500" y="188.500" textLength="15" {...lab}>19</text>
          <text x="563.500" y="282" textLength="15" {...lab}>20</text>
          <text x="563.500" y="339" textLength="15" {...lab}>21</text>
          <text x="563.500" y="374.500" textLength="15" {...lab}>22</text>
        </BoardArt>
        <Side>
          <GroupName><Txt w={52} size={15} weight={700}>Grupo 1</Txt></GroupName>
          <Note>{noteLines.map(([t, w]) => <NoteLine key={t}><Txt w={w} size={11.5} weight={700}>{t}</Txt></NoteLine>)}</Note>
          <Key>
            <KeyRow><KeyColor $bg="#22b573" /><Txt w={19} size={8} weight={700}>chica</Txt></KeyRow>
            <KeyRow><KeyColor $bg="#fbb03b" /><Txt w={19} size={8} weight={700}>chico</Txt></KeyRow>
          </Key>
        </Side>
      </Artboard>
    </>
  );
}

const dashNames = ["guión", "hueco", "guión", "hueco", "guión", "hueco"];

function StrokePane() {
  const L = ({ w, on, children }) => (
    <FieldLabel $w={104.5} $off={!on}><Txt w={w} size={15.5} weight={on ? 600 : 500}>{children}</Txt></FieldLabel>
  );
  return (
    <Pane $h={482}>
      <Row $mt={11} $h={29}><L w={51} on>Grosor:</L><Combo w={130} step /></Row>
      <Row $mt={12} $h={28}><L w={54}>Remate:</L><OffTrio items={offIcons.cap} /></Row>
      <Row $mt={12} $h={28}>
        <L w={51}>Vértice:</L><OffTrio items={offIcons.corner} />
        <Txt w={43} gap={12} size={15.5} weight={500} color={c.dim}>Límite:</Txt>
        <Combo gap={7} w={57} off drop={false} />
        <Txt w={8} gap={6} size={15} color={c.dim}>x</Txt>
      </Row>
      <Row $mt={12} $h={28}><L w={88}>Alinear trazo:</L><OffTrio items={offIcons.stroke} /></Row>
      <Rule $w={346} $m="9px 0 0 8px" />
      <Row $mt={9} $h={31} $pl={9}>
        <Check><svg width="13" height="3"><rect width="13" height="3" fill="#ddd" /></svg></Check>
        <Txt w={118} gap={6} size={15.5} weight={600}>Línea discontinua</Txt>
        <OffBtns $gap={79} $h={30}>
          <OffBtn $w={59}><svg width="42" height="18"><path d="M1 11v6h6M1 6V1M3 1h9M17 1h12M34 1h7v5M41 10v6M14 17h10M30 17h9" fill="none" stroke={O} strokeWidth="2.500" /></svg></OffBtn>
          <OffBtn $w={58} $last><svg width="42" height="18"><path d="M1 6V1h6M35 1h6v5M41 12v5h-6M7 17H1v-5M15 1h12M15 17h12" fill="none" stroke={O} strokeWidth="2.500" /></svg></OffBtn>
        </OffBtns>
      </Row>
      <DashCols $mt={10} $h={30}>{dashNames.map((n, i) => <DashField key={i} />)}</DashCols>
      <DashCols $h={26}>{dashNames.map((n, i) => <DashLabel key={i}><Txt w={i % 2 ? 42 : 37} size={15} color={c.dim}>{n}</Txt></DashLabel>)}</DashCols>
      <Rule $w={346} $m="3px 0 0 8px" />
      <Row $mt={12} $h={29}>
        <L w={97}>Puntas flecha:</L><Combo w={83} off /><Combo gap={16} w={82} off />
        <Gap $w={33} /><svg width="21" height="18" viewBox="0 0 21 18"><path d="M1 5h13M7 13h13" stroke={O} strokeWidth="2.500" /><path d="M13 0l8 5-8 5zM8 8l-8 5 8 5z" fill={O} /></svg>
      </Row>
      <Row $mt={17} $h={29}>
        <L w={48}>Escala:</L>
        <Combo w={83} off step drop={false} pl={7}><Txt w={38} size={15} weight={500}>100%</Txt></Combo>
        <Combo gap={16} w={82} off step drop={false} pl={7}><Txt w={38} size={15} weight={500}>100%</Txt></Combo>
        <Gap $w={31} /><svg width="24" height="22" viewBox="0 0 24 22"><path d="M8 8V4c0-4 8-4 8 0v4M8 14v4c0 4 8 4 8 0v-4" fill="none" stroke={O} strokeWidth="2.500" /><path d="M0 11h5M19 11h5M1 4l4 3M23 4l-4 3M1 18l4-3M23 18l-4-3" stroke={O} strokeWidth="1.800" /></svg>
      </Row>
      <Row $mt={15} $h={31}>
        <L w={51}>Alinear:</L>
        <OffTrio items={[
          <svg key="a" width="18" height="16"><path d="M0 2h10v6M0 11h11" fill="none" stroke={O} strokeWidth="2.200" /><path d="M10 6l8 5-8 5z" fill={O} /></svg>,
          <svg key="b" width="18" height="16"><path d="M0 2h18v4M0 11h11" fill="none" stroke={O} strokeWidth="2.200" /><path d="M9 6l8 5-8 5z" fill={O} /></svg>,
        ]} />
      </Row>
      <Rule $w={346} $m="8px 0 0 8px" />
      <Row $mt={12} $h={29}>
        <L w={39}>Perfil:</L><Combo w={159} off />
        <Gap $w={17} /><svg width="20" height="16"><path d="M1 1v14l7-7z" fill="none" stroke={O} strokeWidth="1.500" /><path d="M20 0v16l-8-8z" fill={O} /><path d="M10 0v16" stroke={O} strokeWidth="1.500" strokeDasharray="2 2" /></svg>
        <Gap $w={18} /><svg width="17" height="22"><path d="M1 0h15l-7.500 9z" fill={O} /><path d="M0 11h17" stroke={O} strokeDasharray="2 2" strokeWidth="1.500" /><path d="M2 21h13l-6.500-7z" fill="none" stroke={O} strokeWidth="1.500" /></svg>
      </Row>
    </Pane>
  );
}

function StylesPane() {
  const none = <g><rect x="8" y="32" width="11" height="11" fill="#fff" stroke="#222" strokeWidth="1.500" /><path d="M9 42l9-9" stroke="#e8202a" strokeWidth="3" /></g>;
  return (
    <Pane $h={643}>
      <StyleList>
        <Swatches>
          <Swatch><svg width="49" height="49"><rect x="8" y="7" width="34" height="36" fill="#fff" stroke="#555" strokeWidth="1.500" /><rect x="10" y="33" width="9" height="10" fill="#333" /><rect x="6" y="29" width="9" height="9" fill="#fff" stroke="#333" strokeWidth="1.500" /></svg></Swatch>
          <Swatch><svg width="49" height="49"><rect x="14" y="13" width="24" height="24" fill="#aaa" /><rect x="10" y="10" width="24" height="22" fill="#fff" stroke="#aaa" strokeWidth="1.500" />{none}</svg></Swatch>
          <Swatch><svg width="49" height="49"><rect x="13" y="13" width="24" height="24" fill="#fff" stroke="#999" strokeWidth="3" />{none}</svg></Swatch>
          <Swatch><svg width="49" height="49"><rect x="6" y="6" width="37" height="37" fill="#1f609b" /><path d="M7 7h12c-8 7-8 15-10 25l-3 4zM22 21c5-10 14-10 21-13v6c-7 0-11 5-16 9 6-1 9-3 16-3v4c-8 0-9 6-10 12 1 4 2 5 0 7-4-8-3-13-6-16zM9 34c6 0 10 2 13 8l-3 1c-2-5-7-6-11-5z" fill="#92cbe4" /><path d="M24 8c-9 4-13 10-12 21l9 4c-4-9-3-16 6-23M34 27c-4 5-5 10 2 16M28 33l3 10" fill="none" stroke="#0b3f79" strokeWidth="3.500" /><path d="M26 15l15-7M28 19l14-5M29 23l13-3M39 25c-3 6-3 11 1 18" stroke="#d8f0f6" strokeWidth="1.300" fill="none" /></svg></Swatch>
        </Swatches>
        <ListScroll><Tri $dir="up" $s={6} $color="#8a8a8a" /><Tri $s={6} $color="#8a8a8a" /></ListScroll>
      </StyleList>
      <Row $h={31} $pl={14}>
        <svg width="26" height="19" viewBox="0 0 26 19"><path d="M1.500 2v15M6 1v16M10 3v14M11 4l5 13" stroke={G} strokeWidth="2.500" /><path d="M18 12h8l-4 5z" fill={G} /></svg>
        <Grow />
        <svg width="24" height="18" viewBox="0 0 24 18"><path d="M9 5H5c-5 0-5 8 0 8h4M15 5h4c5 0 5 8 0 8h-4" fill="none" stroke="#707070" strokeWidth="2.200" /><path d="M12 0v4M12 14v4M7 0l2 3M17 0l-2 3M7 18l2-3M17 18l-2-3" stroke="#707070" strokeWidth="1.500" /></svg>
        <Gap $w={19} />
        <svg width="16" height="17" viewBox="0 0 16 17"><path d="M0 0h16v17H7V9H0z" fill="#c8c8c8" /><path d="M0 11h5v6z" fill="#aaa" /></svg>
        <Gap $w={23} />
        <svg width="17" height="19" viewBox="0 0 17 19"><path d="M0 4h17M6 4V1h5v3M2 6l1 12h11l1-12M6 6v12M9 6v12M12 6v12" fill="none" stroke="#6c6c6c" strokeWidth="1.600" /></svg>
        <Gap $w={43} />
      </Row>
    </Pane>
  );
}

function Measure({ k, gap, w }) {
  return (
    <>
      <Gap $w={gap} />
      <Indent k={k} />
      <Combo gap={8} w={w} step drop={false} pl={6}><Txt w={28} size={16}>0 pt</Txt></Combo>
    </>
  );
}

function DockArea() {
  const T = ({ w, pl, tw, on, dia, children }) => (
    <Tab $w={w} $pl={pl} $on={on}>{dia && <><Diamond /><Gap $w={3} /></>}<Txt w={tw} size={15} weight={600}>{children}</Txt></Tab>
  );
  return (
    <Dock>
      <DockHead><Chevrons /></DockHead>
      <Tabs>
        <T w={72} pl={8} tw={40} on dia>Trazo</T>
        <T w={62} pl={11} tw={49}>Degrad</T>
        <T w={61} pl={9} tw={58}>Transpa</T>
        <T w={62} pl={10} tw={50}>Alinear</T>
        <T w={66} pl={10} tw={59}>Buscatra</T>
        <TabMenu><ListMenu /></TabMenu>
      </Tabs>
      <StrokePane />
      <Tabs $mt={4}>
        <T w={49} pl={11} tw={36}>Mesa</T>
        <T w={48} pl={10} tw={39}>Capas</T>
        <T w={48} pl={9} tw={37}>Enlac</T>
        <T w={47} pl={9} tw={37}>Mues</T>
        <T w={129} pl={10} tw={106} on>Estilos gráficos</T>
        <TabMenu><ListMenu /></TabMenu>
      </Tabs>
      <StylesPane />
      <Tabs $mt={3}>
        <T w={62} pl={11} tw={38}>Color</T>
        <T w={82} pl={6} tw={52} on dia>Párrafo</T>
        <T w={94} pl={10} tw={73}>OpenType</T>
        <T w={82} pl={10} tw={58}>Carácter</T>
        <TabMenu><ListMenu /></TabMenu>
      </Tabs>
      <Pane $h={240}>
        <Row $mt={12} $h={37} $pl={9}>
          {["left", "center", "right", "jl", "jc", "jr", "jj"].map((k, i) => <AlignBtn key={k} $on={i === 0}><AlignArt k={k} /></AlignBtn>)}
        </Row>
        <Rule $w={338} $m="9px 0 0 8px" />
        <Row $mt={10} $h={29}><Measure k="left" gap={9} w={121} /><Measure k="right" gap={26} w={122} /></Row>
        <Row $mt={11} $h={29}><Measure k="first" gap={9} w={121} /></Row>
        <Rule $w={338} $m="9px 0 0 8px" />
        <Row $mt={10} $h={29}><Measure k="before" gap={9} w={121} /><Measure k="after" gap={26} w={122} /></Row>
        <Rule $w={338} $m="8px 0 0 8px" />
        <Row $mt={10} $h={19} $pl={9}><Check><Tick /></Check><Txt w={54} gap={6} size={15.5} weight={600}>Separar</Txt></Row>
      </Pane>
    </Dock>
  );
}

function Tasks() {
  return (
    <Taskbar>
      <Task $w={92}><svg width="32" height="32" viewBox="0 0 32 32"><path d="M0 5l13-2v12H0zM15 3l17-3v15H15zM0 17h13v12L0 27zM15 17h17v15l-17-3z" fill="#fff" /></svg></Task>
      <Task $w={94.5}><svg width="32" height="30" viewBox="0 0 32 30"><path d="M1.500 0v6h19V0M1.500 30v-6h19v6M3 10h16v10H3zM29 0v30" fill="none" stroke="#fff" strokeWidth="2" /><rect x="27" y="9" width="5" height="5" fill="#fff" /></svg></Task>
      <Gap $w={2.5} />
      <Task><svg width="46" height="47" viewBox="0 0 46 47"><rect width="46" height="47" fill="#0c77db" /><circle cx="23" cy="23.500" r="20" fill="#fff" /><path d="M6 23.500l9-8v5h16v-5l9 8-9 8v-5H15v5z" fill="#0c77db" /></svg></Task>
      <Task><svg width="42" height="42" viewBox="0 0 42 42"><path d="M1 41l3-11A20 20 0 1 1 12 38z" fill="#fff" /><circle cx="21.500" cy="20.500" r="16.500" fill="#27c045" /><path d="M13 13c2-3 4-2 5 1l1 3-2 3c2 4 4 5 7 6l3-3 5 3c0 5-5 6-9 4-6-2-12-9-12-13z" fill="#fff" /></svg></Task>
      <Task $run><svg width="43" height="36" viewBox="0 0 43 36"><path d="M0 1h17l3 4h22v29H0z" fill="#fbe08c" /><path d="M0 1h17v6H0z" fill="#f7c52c" /><path d="M9 19h26v16h-7V26H16v9H9z" fill="#3cb3e6" /></svg></Task>
      <Task><svg width="43" height="34" viewBox="0 0 43 34"><rect x="1" y="1" width="41" height="32" fill="#22252b" stroke="#a3a8ae" strokeWidth="2" /><rect x="1" y="0" width="41" height="4" fill="#b4b7bb" /><text x="6" y="16" fontSize="9" fill="#ddd" fontFamily="Liberation Mono, monospace">C:\_</text></svg></Task>
      <Task><svg width="46" height="47" viewBox="0 0 46 47"><rect width="46" height="47" fill="#1c1c1c" /><path d="M2 0l9 3 9 10 14 6 9 12 1 7-3 6-6-2-5-8-9-8-8-2C7 17 2 9 2 0z" fill="#d6d6d6" /><path d="M27 3l10 3 4 12 1 14-5-8-8-6z" fill="#eee" /><path d="M13 12l8 9 8 3" stroke="#444" strokeWidth="2" fill="none" /><circle cx="22" cy="26" r="2" fill="#d22" /><path d="M2 16l7 12 2 13-5-8z" fill="#bbb" /></svg></Task>
      <Task><svg width="46" height="47" viewBox="0 0 46 47"><rect width="46" height="47" fill="#8b8f93" /><path d="M14 0v10l-6 2 2 6M46 11H31" stroke="#2a211c" strokeWidth="4" fill="none" /><path d="M3 45c0-12 4-18 20-18s20 6 20 18z" fill="#86b036" stroke="#eee" strokeWidth="2" /><path d="M12 24l4 7M34 24l-4 7" stroke="#eee" strokeWidth="3" /><circle cx="16" cy="38" r="2.500" fill="#fff" /><circle cx="31" cy="38" r="2.500" fill="#fff" /></svg></Task>
      <Task><QGis /></Task>
      <Task>{adobeBox("Id", "#ee3f9c", "#33061f", 20)}</Task>
      <Task>{adobeBox("Ps", "#7cb5ef", "#0a0750", 24)}</Task>
      <Task $run>{adobeBox("Ai", "#f69d2c", "#261300", 23)}</Task>
      <Task>
        <svg width="42" height="42" viewBox="0 0 42 42">
          <rect x="11" y="2" width="20" height="12" rx="6" fill="#c3202b" stroke="#aaa" strokeWidth="2" />
          <rect x="11" y="30" width="20" height="11" rx="5" fill="#c3202b" stroke="#aaa" strokeWidth="2" />
          <path d="M6 28c-3-14 10-16 16-8 4 6 8 8 14 5M36 15c4 14-9 16-15 9-4-6-8-8-14-5" fill="none" stroke="#b5b5b5" strokeWidth="10" />
          <path d="M6 28c-3-14 10-16 16-8 4 6 8 8 14 5M36 15c4 14-9 16-15 9-4-6-8-8-14-5" fill="none" stroke="#2b2b2b" strokeWidth="7" />
          <path d="M14 6h13M14 36h13" stroke="#f5dddd" strokeWidth="2.500" />
        </svg>
      </Task>
      <Task><svg width="44" height="38" viewBox="0 0 44 38"><circle cx="28" cy="22" r="15" fill="#f5821f" /><path d="M0 29l18-13H6v-4h17L18 2l4-1 16 13-18 10-15 7z" fill="#f5821f" /><circle cx="28" cy="22" r="9" fill="#fff" /><circle cx="28" cy="22" r="5.500" fill="#19508f" /></svg></Task>
      <Task><svg width="47" height="47" viewBox="0 0 47 47"><defs><linearGradient id="at" x2="0" y2="1"><stop offset="0" stopColor="#a6dc96" /><stop offset="1" stopColor="#1fa57e" /></linearGradient></defs><circle cx="23.500" cy="23.500" r="23.500" fill="url(#at)" /><g fill="none" stroke="#eef" strokeWidth="1.600"><ellipse cx="23.500" cy="23.500" rx="14" ry="5" /><ellipse cx="23.500" cy="23.500" rx="15" ry="5" transform="rotate(60 23.500 23.500)" /><ellipse cx="23.500" cy="23.500" rx="15" ry="5" transform="rotate(120 23.500 23.500)" /></g><circle cx="23.500" cy="23.500" r="2" fill="#fff" /></svg></Task>
      <Task><svg width="44" height="46" viewBox="0 0 44 46"><path d="M27 20l3-14L44 0l-1 16-8 10z" fill="#b4b4b4" /><path d="M0 46l8-8 14-2-8 6-8 1z" fill="#999" /><ellipse cx="25" cy="29" rx="17" ry="8" fill="none" stroke="#4b6d26" strokeWidth="3" /><path d="M16 15l9-2 8 7 1 12-8 7-10-2-5-9z" fill="#a65a57" /></svg></Task>
      <Task $run><svg width="42" height="42" viewBox="0 0 42 42"><circle cx="21" cy="21" r="21" fill="#279a5a" /><path d="M3 10l9 16 9-5V11h18.500A21 21 0 0 0 3 10z" fill="#dc4a3c" /><path d="M39.500 11H21l9 15-10 16A21 21 0 0 0 39.500 11z" fill="#fdd24a" /><circle cx="21" cy="21" r="9.500" fill="#fff" /><circle cx="21" cy="21" r="8" fill="#4682ee" /></svg></Task>
      <Task $run><svg width="42" height="42" viewBox="0 0 42 42"><circle cx="21" cy="21" r="21" fill="#1ed760" /><path d="M8 14c9-3 19-2 26 3M10 21c8-2 16-1 22 3M11 28c7-2 13-1 18 2" fill="none" stroke="#16231a" strokeWidth="3.800" strokeLinecap="round" /></svg></Task>
      <Task $run><svg width="35" height="35" viewBox="0 0 35 35"><path d="M0 0h35v18H18v17H0z" fill="#fff" /><path d="M18 18h17L20 35h-2z" fill="#222" /><path d="M35 18v17H20z" fill="#fff" /></svg></Task>
      <Task $run><QGis /></Task>
      <Grow />
      <Task $w={84}><svg width="29" height="29" viewBox="0 0 29 29"><g fill="none" stroke="#fff" strokeWidth="2.200"><circle cx="20" cy="6" r="5" /><circle cx="8" cy="16" r="5" /><path d="M1 28c0-9 14-9 14 0M14 14c3-5 13-5 14 3" /></g></svg></Task>
      <Task $w={54}><svg width="24" height="14"><path d="M1 13L12 2l11 11" fill="none" stroke="#fff" strokeWidth="2.200" /></svg></Task>
      <Task $w={37}><svg width="30" height="21" viewBox="0 0 30 21"><path d="M6 4h22v16H5M28 9h2v6h-2" fill="none" stroke="#fff" strokeWidth="2" /><rect x="8" y="7" width="16" height="11" fill="#fff" /><path d="M1 0v3M6 0v3M0 3h7v4H0zM3.500 7v12" stroke="#fff" strokeWidth="1.800" fill="none" /></svg></Task>
      <Task $w={58}><svg width="32" height="26" viewBox="0 0 32 26"><path d="M3 17c-5-3-2-10 3-9 3-9 15-10 19-2 7 2 7 12 0 13H6z" fill="#fff" /><circle cx="22" cy="17" r="9" fill="#e8eefb" /><path d="M16 15c2-5 9-5 11-1M28 19c-2 5-9 5-11 1" fill="none" stroke="#1d5fc4" strokeWidth="2.500" /><path d="M28 10v5h-5zM16 24v-5h5z" fill="#1d5fc4" /></svg></Task>
      <Task $w={35}><svg width="24" height="24" viewBox="0 0 24 24"><g fill="none" stroke="#ddd" strokeWidth="1.700"><path d="M1 23C1 10 10 1 23 1M6 23C6 13 13 6 23 6M11 23c0-7 5-12 12-12M16 23c0-4 3-7 7-7" /></g><circle cx="21" cy="21" r="2.500" fill="#fff" /></svg></Task>
      <Task $w={55}><svg width="32" height="26" viewBox="0 0 32 26"><path d="M1 8h5l6-6v22l-6-6H1z" fill="none" stroke="#fff" strokeWidth="2" /><path d="M16 9c2 2 2 6 0 8" stroke="#fff" strokeWidth="2" fill="none" /><path d="M20 5c5 4 5 12 0 16M25 1c7 6 7 18 0 24" stroke="#85807a" strokeWidth="2" fill="none" /></svg></Task>
      <Task $w={58}><Txt w={40} size={23}>CAT</Txt></Task>
      <Clock $w={156}><Txt w={53} size={22}>13:08</Txt><Txt w={117} size={22}>05/07/2018</Txt></Clock>
      <Task $w={60}><svg width="31" height="30" viewBox="0 0 31 30"><path d="M0 0h31v26H18l-2 4-5-4H0z" fill="#fff" /><path d="M6 7h19M6 13h19M6 19h10" stroke="#1e170f" strokeWidth="2" /><circle cx="30" cy="30" r="15" fill="#3a3a3a" stroke="#8a8a8a" strokeWidth="1.500" /><text x="30" y="37" textAnchor="middle" fontSize="20" fontWeight="600" fill="#fff" fontFamily="Noto Sans, sans-serif">3</text></svg></Task>
      <TrayEnd />
    </Taskbar>
  );
}

export default function App() {
  return (
    <Page>
      <Global />
      <Title><Txt w={405} size={103} weight={700}>exportar</Txt></Title>
      <Screen>
        <Win>
          <TopBars />
          <Body>
            <Left>
              <DocTabs>
                <DocTab $w={501} $on><Txt w={447} size={16.5} weight={600}>plantilla_mapas y gráficos.ai* al 50% (RGB/Previsualizar)</Txt><Gap $w={19} /><CloseX s={9} /></DocTab>
                <DocTab $w={461}><Txt w={407} size={16.5} weight={600}>illustrator_snapshots.ai* al 50% (RGB/Previsualizar)</Txt><Gap $w={19} /><CloseX s={9} /></DocTab>
              </DocTabs>
              <Work>
                <Canvas>
                  <Boards />
                  <ToolPanel />
                  <JpegDialog />
                  <Frame $x={492} $y={222} $w={280} $h={110} $b={12} />
                  <Frame $x={494} $y={437} $w={276} $h={58} $b={9} />
                  <Arrow width="628" height="30" viewBox="0 0 628 30"><path d="M0 10h614v9H0zM599 0h14l15 15-15 15h-14l13-15z" fill={c.cyan} /></Arrow>
                  <Callout>
                    <Txt w={442} size={50.4} weight={700}>rgb: para pantallas</Txt>
                    <Txt w={464} size={50.4} weight={700}>cmyk: para imprimir</Txt>
                  </Callout>
                </Canvas>
                <VScroll>
                  <Gap $w={1} />
                  <Row $h={32}><Tri $dir="up" $s={7} $len={8} /></Row>
                  <Thumb $m="670px 0 662px" />
                  <Row $h={26}><Tri $s={7} $len={10} /></Row>
                </VScroll>
              </Work>
              <Status>
                <Combo w={89} h={25} pl={5}><Txt w={30} size={15.5}>50%</Txt></Combo>
                <Gap $w={12} />
                <svg width="14" height="12"><path d="M1 0h2v12H1zM13 0v12L5 6z" fill="#ccc" /></svg>
                <Tri $dir="left" $gap={16} $s={6} $len={7} />
                <Combo gap={16} w={89} h={25} pl={4}><Txt w={8} size={15.5}>2</Txt></Combo>
                <Tri $dir="right" $gap={15} $s={6} $len={8} $color="#6a6a6a" />
                <Gap $w={15} />
                <svg width="14" height="12"><path d="M11 0h2v12h-2zM1 0v12l8-6z" fill="#6a6a6a" /></svg>
                <Gap $w={12} />
                <StatusLabel $w={308}><Txt w={62} size={16}>Selección</Txt></StatusLabel>
                <StatusLabel $w={29} $pl={9}><Tri $dir="right" $s={6} $len={8} /></StatusLabel>
                <HScroll>
                  <Tri $dir="left" $s={6} $len={9} />
                  <Thumb $m="0 0 0 949px" />
                  <Grow />
                  <Tri $dir="right" $s={7} $len={10} />
                  <Gap $w={30} />
                </HScroll>
              </Status>
            </Left>
            <DockArea />
          </Body>
        </Win>
        <Tasks />
      </Screen>
    </Page>
  );
}
